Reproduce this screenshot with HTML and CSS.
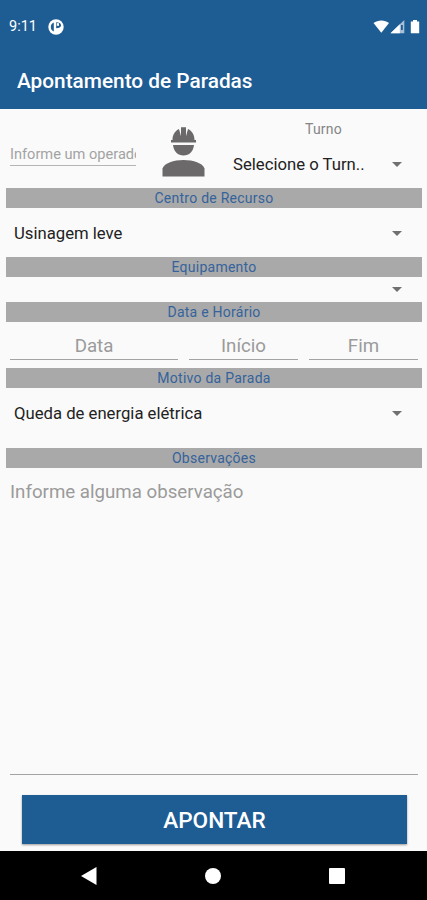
FILE: index.html
```html
<!doctype html>
<html lang="pt-BR">

<head>
  <meta charset="utf-8">
  <title>Apontamento de Paradas</title>
  <link rel="stylesheet" href="styles.css">
</head>

<body>
  <header>
    <div class="status">
      <span class="clock">9:11</span>
      <svg class="app-icon" width="16" height="16" viewBox="0 0 16 16">
        <circle cx="8" cy="8" r="7.7" fill="#fff"/>
        <path d="M5.8 3.6v8.8C3.800 11.600 2.800 10 2.800 8s1-3.600 3-4.400z" fill="#1e5c94"/>
        <path d="M8.200 3.200c3 0 4.800 1.200 4.800 3S11.200 9.200 8.200 9.200z" fill="#1e5c94"/>
        <rect x="8.800" y="4.200" width="2.200" height="2.600" fill="#fff"/>
      </svg>
      <svg class="signals" width="48" height="16" viewBox="0 0 48 16">
        <path d="M0.5 4C4.8 0.6 11.9 0.6 16 4L8.3 13.7z" fill="#fff"/>
        <path d="M17.5 14.3L31.3 1v13.3z" fill="#a9bfd8"/>
        <path d="M17.5 14.3L26.8 5.3v9z" fill="#fff"/>
        <path d="M28 6h1.8v5H28z" fill="#1e5c94"/>
        <path d="M37.8 2.5h2.2V1h4v1.5h2.2v11.8h-8.4z" fill="#fff"/>
      </svg>
    </div>
    <h1>Apontamento de Paradas</h1>
  </header>

  <main>
    <div class="top-row">
      <div class="operator"><span>Informe um operador</span></div>
      <svg class="worker" width="44" height="52" viewBox="0 0 44 52">
        <g fill="#6b696a">
          <path d="M9 17.4v-2.3h1.500C10.500 9.700 13 5.800 17 4l2 7.200V2.200h5v9L26 4c4 1.800 6.500 5.700 6.500 11.100h1.500v2.300z"/>
          <path d="M11 20h21c-.8 6.500-4.800 10.500-10.500 10.500S11.800 26.500 11 20z"/>
          <path d="M.5 51.500V43.500C2.500 38 11.500 35 21.500 35s19 3 21 8.500v8z"/>
        </g>
      </svg>
      <div class="shift">
        <label>Turno</label>
        <div class="select">Selecione o Turn..<i class="arrow"></i></div>
      </div>
    </div>

    <h2>Centro de Recurso</h2>
    <div class="select resource">Usinagem leve<i class="arrow"></i></div>

    <h2>Equipamento</h2>
    <div class="select equipment"><i class="arrow"></i></div>

    <h2>Data e Horário</h2>
    <div class="dates">
      <div class="field day">Data</div>
      <div class="field start">Início</div>
      <div class="field end">Fim</div>
    </div>

    <h2>Motivo da Parada</h2>
    <div class="select reason">Queda de energia elétrica<i class="arrow"></i></div>

    <h2>Observações</h2>
    <div class="notes">Informe alguma observação</div>

    <button>APONTAR</button>
  </main>

  <nav>
    <svg width="16" height="18" viewBox="0 0 16 18"><path d="M0 9L15.5 0v18z" fill="#fff"/></svg>
    <svg width="16" height="16" viewBox="0 0 16 16"><circle cx="8" cy="8" r="8" fill="#fff"/></svg>
    <svg width="16" height="16" viewBox="0 0 16 16"><rect width="16" height="16" rx="1" fill="#fff"/></svg>
  </nav>
</body>

</html>
```
FILE: styles.css
```css
* {
  box-sizing: border-box;
}

body {
  margin: 0;
  width: 427px;
  height: 900px;
  display: flex;
  flex-direction: column;
  background-color: #fafafa;
  font-family: Roboto, sans-serif;
  color: #222;
  overflow: hidden;
}

/* top bar */
header {
  height: 109px;
  background-color: #1e5c94;
  color: #fff;
}

.status {
  height: 53px;
  padding: 0 6px 0 9px;
  display: flex;
  align-items: center;
}

.clock {
  font-size: 14.5px;
  width: 39px;
}

.signals {
  margin-left: auto;
}

h1 {
  margin: 0;
  padding-left: 17px;
  font-size: 20.8px;
  font-weight: 500;
  line-height: 57px;
  white-space: nowrap;
}

/* form */
main {
  flex: 1;
  padding: 0 5px 0 6px;
}

h2 {
  margin: 0;
  height: 19.5px;
  background-color: #a9a9a9;
  color: #35639b;
  font-size: 14px;
  font-weight: 400;
  line-height: 21px;
  letter-spacing: 0.25px;
  text-align: center;
}

.top-row {
  height: 79.3px;
  display: flex;
}

.operator {
  width: 126px;
  height: 57px;
  margin-left: 4px;
  padding-top: 35px;
  border-bottom: 1px solid #b5b5b5;
  color: #a3a3a3;
  font-size: 14.6px;
  line-height: 20px;
}

.operator span {
  display: block;
  overflow: hidden;
  white-space: nowrap;
}

.worker {
  margin: 16px 0 0 26px;
}

.shift {
  flex: 1;
  margin-left: 19px;
}

.shift label {
  display: block;
  margin-top: 10px;
  color: #858585;
  font-size: 14px;
  letter-spacing: 0.2px;
  line-height: 21px;
  text-align: center;
}

.select {
  display: flex;
  align-items: center;
  padding: 0 20px 0 8px;
  font-size: 16.7px;
  white-space: nowrap;
}

.shift .select {
  height: 49px;
}

.arrow {
  margin-left: auto;
  border: 5px solid transparent;
  border-top-color: #707070;
  border-bottom: 0;
}

.resource {
  height: 49.5px;
  padding-top: 2px;
}

.equipment {
  height: 25.3px;
}

.reason {
  height: 60.5px;
  padding-bottom: 9px;
}

.dates {
  display: flex;
  gap: 11px;
  height: 46.5px;
  padding: 0 4px;
}

.field {
  height: 38.5px;
  border-bottom: 1px solid #a3a3a3;
  color: #9b9b9b;
  font-size: 18.7px;
  line-height: 48px;
  text-align: center;
}

.day {
  width: 168px;
}

.start {
  width: 109px;
}

.end {
  flex: 1;
}

.notes {
  height: 307.5px;
  margin: 0 4px;
  padding-top: 12px;
  border-bottom: 1px solid #a3a3a3;
  color: #9b9b9b;
  font-size: 18.7px;
  line-height: 24px;
}

button {
  display: block;
  width: 385px;
  height: 49px;
  margin: 20px 0 0 16px;
  padding: 2px 0 0;
  border: 0;
  background-color: #1e5c94;
  box-shadow: 0 1px 2px #999;
  color: #fff;
  font-family: inherit;
  font-size: 22.6px;
  font-weight: 500;
}

/* android buttons */
nav {
  height: 49px;
  padding: 0 82px 0 81px;
  display: flex;
  align-items: center;
  justify-content: space-between;
  background-color: #000;
}
```
